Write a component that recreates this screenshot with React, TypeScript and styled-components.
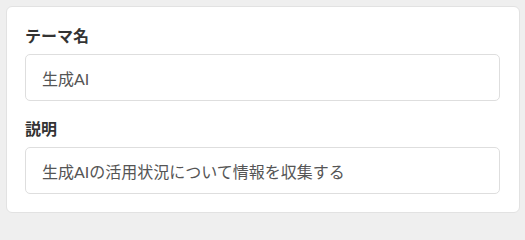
import React from "react";
import styled, { createGlobalStyle } from "styled-components";

const Global = createGlobalStyle`
  html, body {
    margin: 0;
    padding: 0;
    background: #efefef;
  }
  * { box-sizing: border-box; }
`;

const Page = styled.div`
  padding: 6px;
  font-family: Lato, "Noto Sans CJK JP", sans-serif;
`;

const Card = styled.div`
  width: 514px;
  height: 207px;
  background: #ffffff;
  border: 1px solid #e2e2e2;
  border-radius: 6px;
  padding: 17px 19px 19px 18px;
  display: flex;
  flex-direction: column;
  gap: 16px;
`;

const Field = styled.div`
  display: flex;
  flex-direction: column;
  gap: 6px;
`;

const Label = styled.label`
  font-size: 16px;
  line-height: 24px;
  font-weight: 700;
  color: #333333;
`;

const Input = styled.input`
  height: 47px;
  width: 100%;
  border: 1px solid #dedede;
  border-radius: 5px;
  padding: 0 16px;
  font-family: inherit;
  font-size: 16px;
  color: #555555;
  background: #ffffff;
  outline: none;
`;

export default function App() {
  return (
    <>
      <Global />
      <Page>
        <Card>
          <Field>
            <Label>テーマ名</Label>
            <Input readOnly defaultValue="生成AI" />
          </Field>
          <Field>
            <Label>説明</Label>
            <Input readOnly defaultValue="生成AIの活用状況について情報を収集する" />
          </Field>
        </Card>
      </Page>
    </>
  );
}
